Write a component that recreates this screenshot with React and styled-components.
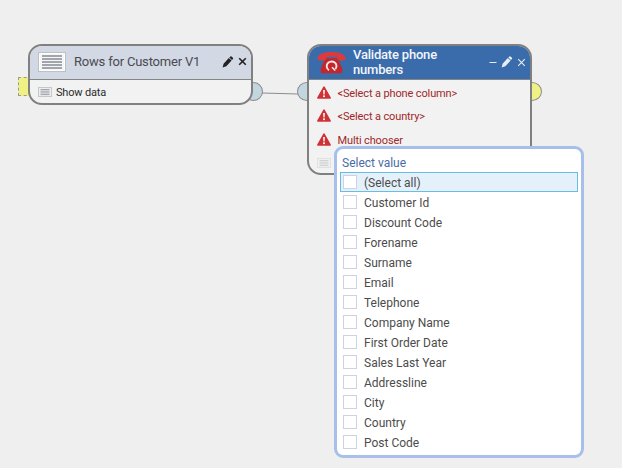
import React from "react";
import styled, { createGlobalStyle } from "styled-components";

const GlobalStyle = createGlobalStyle`
  *, *::before, *::after { box-sizing: border-box; }
  body { margin: 0; background: #efefef; overflow: hidden; }
`;

const Canvas = styled.main`
  position: relative;
  width: 622px;
  height: 468px;
  background: #efefef;
  font-family: Roboto, sans-serif;
  overflow: hidden;
`;

const Wire = styled.svg`
  position: absolute;
  left: 260px;
  top: 88px;
`;

const NodeFrame = styled.section`
  position: absolute;
  left: ${(p) => p.$x}px;
  top: ${(p) => p.$y}px;
  width: 225px;
  height: ${(p) => p.$h}px;
`;

const Port = styled.span`
  position: absolute;
  top: 38px;
  ${(p) => p.$side}: -10px;
  width: 20px;
  height: 19px;
  border: 1px solid #8c8c8c;
  border-radius: 50%;
  background: ${(p) => p.$color};
`;

const EmptyPort = styled.span`
  position: absolute;
  top: 33px;
  left: -10px;
  width: 20px;
  height: 19px;
  border: 1px dashed #9a9a9a;
  background: #f0f184;
`;

const Card = styled.div`
  position: relative;
  height: 100%;
  display: flex;
  flex-direction: column;
  border: 2px solid #808080;
  border-radius: 14px;
  background: #f2f2f2;
  overflow: hidden;
`;

const CardHeader = styled.header`
  flex: none;
  height: 34px;
  display: flex;
  align-items: center;
  padding: 0 3px ${(p) => (p.$active ? 1 : 2)}px 8px;
  border-bottom: 1px solid #858585;
  background: ${(p) => (p.$active ? "#3a6cab" : "#d3d8e5")};
  color: ${(p) => (p.$active ? "#e6edf6" : "#222")};
`;

const Title = styled.h2`
  flex: 1;
  margin: 0 0 0 ${(p) => (p.$strong ? 7 : 8)}px;
  font-size: 13px;
  line-height: 15px;
  letter-spacing: -0.2px;
  font-weight: ${(p) => (p.$strong ? 500 : 400)};
  color: ${(p) => (p.$strong ? "#f2f5fa" : "#4a4b50")};
`;

const Actions = styled.div`
  display: flex;
  align-items: center;
  gap: 3px;
`;

const Body = styled.div`
  display: flex;
  flex-direction: column;
  padding: ${(p) => p.$top}px 0 0 8px;
`;

const BodyRow = styled.div`
  display: flex;
  align-items: center;
  gap: ${(p) => (p.$error ? 6.5 : 4)}px;
  height: ${(p) => p.$h || 23}px;
  font-size: 11px;
  letter-spacing: ${(p) => (p.$error ? -0.13 : -0.17)}px;
  color: ${(p) => (p.$error ? "#a02828" : "#2a2a2a")};
  opacity: ${(p) => (p.$dim ? 0.4 : 1)};
`;

const RowLabel = styled.span`
  padding-top: 2px;
`;

const Popup = styled.section`
  position: absolute;
  left: 334px;
  top: 146px;
  width: 250px;
  height: 312px;
  padding: 7px 3px 0 3px;
  border: 3px solid #a7c0eb;
  border-radius: 9px;
  background: #fff;
`;

const PopupTitle = styled.h3`
  margin: 0 0 1px 2px;
  font-size: 12px;
  line-height: 15px;
  font-weight: 400;
  color: #4a6ca6;
`;

const OptionList = styled.ul`
  margin: 0;
  padding: 0;
  list-style: none;
`;

const Option = styled.li`
  display: flex;
  align-items: center;
  gap: 7px;
  width: 238px;
  height: 20px;
  padding-left: 2px;
  border: 1px solid ${(p) => (p.$active ? "#69bce4" : "transparent")};
  background: ${(p) => (p.$active ? "#e4f1fa" : "transparent")};
  font-size: 12px;
  line-height: 18px;
  color: #4c4c4c;
`;

const CheckBox = styled.span`
  flex: none;
  width: 14px;
  height: 14px;
  border: 1px solid #d2d0e3;
  background: #fff;
`;

const SheetIcon = () => (
  <svg width="28" height="20" viewBox="0 0 28 20">
    <rect x=".5" y=".5" width="27" height="19" fill="#f6f6f6" stroke="#bfc0c5" />
    <rect x="1.5" y="1.5" width="25" height="17" fill="none" stroke="#fff" />
    {[4, 7, 10, 13, 16].map((y) => (
      <path key={y} d={`M4 ${y}H24`} stroke="#858b94" strokeWidth="1.4" />
    ))}
  </svg>
);

const SmallSheetIcon = () => (
  <svg width="14" height="10" viewBox="0 0 14 10">
    <rect x=".5" y=".5" width="13" height="9" fill="#eee" stroke="#c6c7cb" />
    {[2.5, 4.2, 5.9, 7.6].map((y) => (
      <path key={y} d={`M2.5 ${y}H11.5`} stroke="#969ba3" strokeWidth=".9" />
    ))}
  </svg>
);

const PhoneIcon = () => (
  <svg width="29" height="23" viewBox="0 0 29 24" preserveAspectRatio="none">
    <path d="M8 7.5H21L22 11 25.3 18.5V22Q25.3 23.3 24 23.3H5Q3.7 23.3 3.7 22V18.5L7 11Z" fill="#c5262a" />
    <path d="M.5 8C.5 3.5 6 1 14.5 1S28.5 3.5 28.5 8L28 9.3Q24.5 10.5 20.5 9.3L20 6.5Q14.5 5.3 9 6.5L8.5 9.3Q4.5 10.5 1 9.3Z" fill="#dc3b3d" />
    <path d="M12 20A4.9 4.9 0 1 1 18.5 18.8" fill="none" stroke="#f4e6e8" strokeWidth="1.9" />
    <path d="M15 17L18.3 20.3" stroke="#f4e6e8" strokeWidth="1.7" />
  </svg>
);

const WarningIcon = () => (
  <svg width="14" height="13" viewBox="0 0 14 13">
    <path d="M7 1.2L13.1 12H.9Z" fill="#cf3235" stroke="#cf3235" strokeWidth="1.6" strokeLinejoin="round" />
    <path d="M6.1 4H7.9L7.6 8.5H6.4Z" fill="#fff" />
    <circle cx="7" cy="10.3" r="1" fill="#fff" />
  </svg>
);

const PencilIcon = () => (
  <svg width="12" height="12" viewBox="0 0 12 12" fill="currentColor">
    <path d="M.6 11.5L1.6 7.8 6.8 2.1 9.6 4.6 4.3 10.3Z" />
    <path d="M7.3 1.6L8.4.6Q9.1.1 9.8.7L10.9 1.7Q11.5 2.4 10.9 3.1L10 4.1Z" />
  </svg>
);

const CloseIcon = ({ weight }) => (
  <svg width="11" height="11" viewBox="0 0 11 11">
    <path d="M2.2 2.2L8.8 8.8M8.8 2.2L2.2 8.8" stroke="currentColor" strokeWidth={weight} />
  </svg>
);

const MinusIcon = () => (
  <svg width="9" height="11" viewBox="0 0 9 11">
    <path d="M.5 5.5H7.5" stroke="currentColor" strokeWidth="1" />
  </svg>
);

const problems = [
  { text: "<Select a phone column>", height: 23 },
  { text: "<Select a country>", height: 23 },
  { text: "Multi chooser", height: 24 },
];

const options = [
  "(Select all)", "Customer Id", "Discount Code", "Forename", "Surname", "Email", "Telephone",
  "Company Name", "First Order Date", "Sales Last Year", "Addressline", "City", "Country", "Post Code",
];

export default function App() {
  return (
    <>
      <GlobalStyle />
      <Canvas>
        <Wire width="40" height="10">
          <path d="M2 5L38 6" stroke="#8c8c8c" fill="none" />
        </Wire>

        <NodeFrame $x={28} $y={44} $h={61}>
          <EmptyPort />
          <Port $side="right" $color="#c3d6e0" />
          <Card>
            <CardHeader>
              <SheetIcon />
              <Title>Rows for Customer V1</Title>
              <Actions>
                <PencilIcon />
                <CloseIcon weight={1.6} />
              </Actions>
            </CardHeader>
            <Body $top={0}>
              <BodyRow>
                <SmallSheetIcon />
                <RowLabel>Show data</RowLabel>
              </BodyRow>
            </Body>
          </Card>
        </NodeFrame>

        <NodeFrame $x={307} $y={44} $h={131}>
          <Port $side="left" $color="#c3d6e0" />
          <Port $side="right" $color="#f0f184" />
          <Card>
            <CardHeader $active>
              <PhoneIcon />
              <Title $strong>Validate phone numbers</Title>
              <Actions>
                <MinusIcon />
                <PencilIcon />
                <CloseIcon weight={1.1} />
              </Actions>
            </CardHeader>
            <Body $top={1}>
              {problems.map(({ text, height }) => (
                <BodyRow key={text} $error $h={height}>
                  <WarningIcon />
                  <RowLabel>{text}</RowLabel>
                </BodyRow>
              ))}
              <BodyRow $dim>
                <SmallSheetIcon />
              </BodyRow>
            </Body>
          </Card>
        </NodeFrame>

        <Popup>
          <PopupTitle>Select value</PopupTitle>
          <OptionList>
            {options.map((label, i) => (
              <Option key={label} $active={i === 0}>
                <CheckBox />
                <RowLabel>{label}</RowLabel>
              </Option>
            ))}
          </OptionList>
        </Popup>
      </Canvas>
    </>
  );
}
